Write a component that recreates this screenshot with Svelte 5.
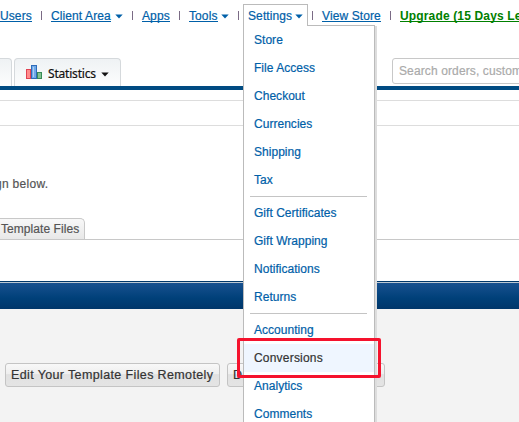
<script>
  const groups = [
    ['Store', 'File Access', 'Checkout', 'Currencies', 'Shipping', 'Tax'],
    ['Gift Certificates', 'Gift Wrapping', 'Notifications', 'Returns'],
    ['Accounting', 'Conversions', 'Analytics', 'Comments']
  ];
</script>

{#snippet arrow()}
  <svg class="arrow" width="8" height="5" viewBox="0 0 8 5"><path d="M0.3 0.5H7.7L4 4.5Z" fill="currentColor" /></svg>
{/snippet}

<div class="page">
  <nav>
    <span class="item users"><a>Users</a></span><i></i>
    <span class="item client"><a>Client Area</a>{@render arrow()}</span><i></i>
    <span class="item apps"><a>Apps</a></span><i></i>
    <span class="item tools"><a>Tools</a>{@render arrow()}</span><i></i>
    <span class="item settings"></span><i></i>
    <span class="item view"><a>View Store</a></span><i></i>
    <span class="item upgrade"><a>Upgrade (15 Days Left)</a></span>
  </nav>

  <div class="tabs">
    <div class="tab cut"></div>
    <div class="tab stats">
      <svg width="16" height="14" viewBox="0 0 16 14">
        <rect x=".5" y="4.5" width="4" height="9" fill="#ff8c8c" stroke="#e04352" />
        <rect x="5.5" y=".5" width="5" height="13" fill="#70a9e8" stroke="#2e6cba" />
        <path d="M7.5 2v10" stroke="#a9cdf5" />
        <rect x="11.5" y="7.5" width="4" height="6" fill="#83c291" stroke="#388b58" />
      </svg>
      <span>Statistics</span>{@render arrow()}
    </div>
    <div class="search">Search orders, customers</div>
  </div>
  <div class="bar"></div>
  <div class="strip"></div>
  <div class="intro"><span>gn below.</span></div>
  <div class="files"><div>Template Files</div></div>
  <div class="gap"></div>
  <div class="band"></div>
  <div class="bottom">
    <div class="button edit">Edit Your Template Files Remotely</div>
    <div class="button down">D</div>
  </div>

  <div class="dropdown">
    <div class="head"><span>Settings</span>{@render arrow()}</div>
    <div class="menu">
      {#each groups as group}
        <ul>
          {#each group as label}
            <li class:active={label === 'Conversions'}>{label}</li>
          {/each}
        </ul>
      {/each}
    </div>
  </div>
  <div class="highlight"></div>
</div>

<style>
  :global(body) { margin: 0; }
  .page {
    position: relative;
    box-sizing: border-box;
    width: 519px;
    height: 422px;
    overflow: hidden;
    background: #fff;
    font: 12px/16px "Liberation Sans", Arial, sans-serif;
    color: #555;
    -webkit-text-stroke: .2px currentColor;
  }
  nav {
    display: flex;
    height: 50px;
    padding-top: 8px;
    box-sizing: border-box;
    color: #0060a8;
    white-space: nowrap;
    letter-spacing: .1px;
  }
  .item { display: flex; flex: none; height: 14px; }
  .item a { height: 13px; border-bottom: 1px solid #0060a8; }
  .item .arrow { margin: 6px 0 0 auto; }
  i { flex: none; width: 1px; height: 9px; margin: 3px 9px 0; background: #7b6b85; }
  .users { width: 32px; }
  .client { width: 72px; }
  .apps { width: 28px; }
  .tools { width: 40px; }
  .settings { width: 55px; }
  .view { width: 59px; }
  .upgrade { color: #008000; font-weight: bold; letter-spacing: .15px; -webkit-text-stroke: 0; }
  .upgrade a { border-bottom-color: #008000; }
  .tabs { display: flex; height: 36px; align-items: flex-end; }
  .tab {
    box-sizing: border-box;
    flex: none;
    height: 28px;
    border: 1px solid #d5d9dc;
    border-bottom: 0;
    border-radius: 4px 4px 0 0;
    background: linear-gradient(#eff2f4, #fcfdfd);
  }
  .cut { width: 12px; border-left: 0; border-radius: 0 4px 0 0; margin-right: 2px; }
  .stats {
    display: flex;
    width: 107px;
    padding: 6px 0 0 11px;
    color: #111;
  }
  .stats span { width: 48px; margin: 1px 5px 0 6px; letter-spacing: -.2px; font-family: "Noto Sans", sans-serif; }
  .stats .arrow { margin-top: 7px; }
  .search {
    box-sizing: border-box;
    align-self: flex-start;
    width: 180px;
    flex: none;
    height: 26px;
    margin: 8px 0 0 271px;
    padding: 4px 6px;
    border: 1px solid #c8c8c8;
    border-radius: 3px;
    color: #aaa;
    white-space: nowrap;
    letter-spacing: .12px;
  }
  .bar { height: 4px; background: #004b82; }
  .strip { height: 10px; border-bottom: 1px solid #ddd; }
  .intro { height: 117px; overflow: hidden; }
  .intro::before { content: ""; display: block; height: 24px; border-bottom: 1px solid #ddd; }
  .intro span { display: block; margin: 50px 0 0 -5px; letter-spacing: .3px; }
  .files { display: flex; height: 21px; border-bottom: 1px solid #c8c8c8; }
  .files div {
    box-sizing: border-box;
    width: 85px;
    padding: 2px 0 0 1px;
    border: 1px solid #c8c8c8;
    border-width: 1px 1px 0 0;
    border-radius: 0 5px 0 0;
    background: linear-gradient(#f8f8f8, #e8e8e8);
    white-space: nowrap;
    letter-spacing: .06px;
  }
  .gap { height: 41px; }
  .band {
    box-sizing: border-box;
    height: 28px;
    border-top: 1px solid #00376a;
    background: linear-gradient(#bdc9d3 0 1px, #185190 1px, #004079 60%, #00366a);
  }
  .bottom {
    display: flex;
    height: 113px;
    padding: 54px 0 0 5px;
    box-sizing: border-box;
    gap: 7px;
    background: #f3f3f3;
  }
  .button {
    box-sizing: border-box;
    flex: none;
    height: 24px;
    border: 1px solid #c4c4c4;
    border-radius: 3px;
    background: linear-gradient(#f8f8f8, #eee 46%, #e1e1e1 48%, #e4e4e4);
    color: #333;
    font-size: 12.5px;
    line-height: 22px;
    padding-left: 5px;
    white-space: nowrap;
  }
  .edit { width: 215px; letter-spacing: .37px; }
  .down { width: 158px; }
  .dropdown { position: absolute; top: 4px; left: 243px; width: 134px; color: #0060a8; }
  .head {
    position: relative;
    z-index: 1;
    box-sizing: border-box;
    display: flex;
    width: 65px;
    height: 22px;
    padding: 3px 0 0 4px;
    border: 1px solid #bbb;
    border-bottom: 0;
    background: #fff;
    letter-spacing: .1px;
  }
  .head .arrow { margin: 6px 0 0 3px; }
  .menu {
    box-sizing: border-box;
    width: 132px;
    height: 410px;
    margin-top: -1px;
    border: 1px solid #bbb;
    box-shadow: 2px 1px 0 #ddd;
    background: #fff;
  }
  ul { list-style: none; margin: 0; padding: 0; }
  ul + ul::before { content: ""; display: block; height: 1px; margin: 2px 7px 2px 6px; background: #c4c4c4; }
  li { height: 28px; box-sizing: border-box; padding: 6px 0 0 10px; letter-spacing: .03px; }
  .active { background: #eff6ff; color: #333; letter-spacing: .2px; }
  .highlight {
    position: absolute;
    left: 237px;
    top: 338px;
    box-sizing: border-box;
    width: 144px;
    height: 40px;
    border: 3px solid #f5122d;
    border-radius: 2px;
  }
</style>
